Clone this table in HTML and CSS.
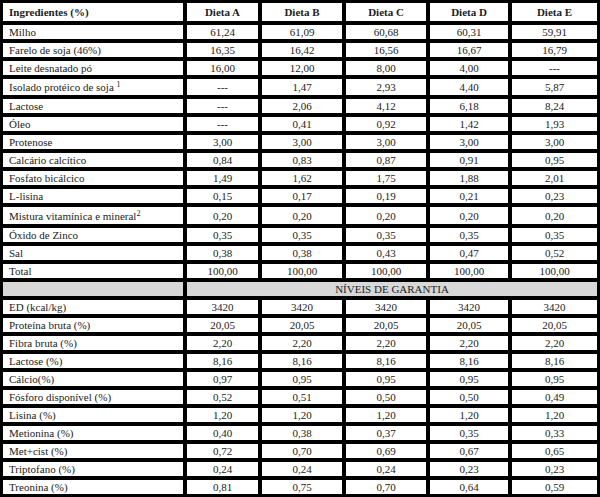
FILE: index.html
```html
<!DOCTYPE html>
<html lang="pt">
<head>
<meta charset="utf-8">
<link rel="stylesheet" href="styles.css">
</head>
<body>
<table class="tbl">
  <colgroup>
    <col class="c0"><col class="ca"><col class="cb"><col class="cc"><col class="cd"><col class="ce">
  </colgroup>
  <tr class="head">
    <td class="name">Ingredientes (%)</td><td>Dieta A</td><td>Dieta B</td><td>Dieta C</td><td>Dieta D</td><td>Dieta E</td>
  </tr>
  <tr><td class="name">Milho</td><td>61,24</td><td>61,09</td><td>60,68</td><td>60,31</td><td>59,91</td></tr>
  <tr><td class="name">Farelo de soja (46%)</td><td>16,35</td><td>16,42</td><td>16,56</td><td>16,67</td><td>16,79</td></tr>
  <tr><td class="name">Leite desnatado pó</td><td>16,00</td><td>12,00</td><td>8,00</td><td>4,00</td><td>---</td></tr>
  <tr class="tall"><td class="name">Isolado protéico de soja <sup>1</sup></td><td>---</td><td>1,47</td><td>2,93</td><td>4,40</td><td>5,87</td></tr>
  <tr><td class="name">Lactose</td><td>---</td><td>2,06</td><td>4,12</td><td>6,18</td><td>8,24</td></tr>
  <tr><td class="name">Óleo</td><td>---</td><td>0,41</td><td>0,92</td><td>1,42</td><td>1,93</td></tr>
  <tr><td class="name">Protenose</td><td>3,00</td><td>3,00</td><td>3,00</td><td>3,00</td><td>3,00</td></tr>
  <tr><td class="name">Calcário calcítico</td><td>0,84</td><td>0,83</td><td>0,87</td><td>0,91</td><td>0,95</td></tr>
  <tr><td class="name">Fosfato bicálcico</td><td>1,49</td><td>1,62</td><td>1,75</td><td>1,88</td><td>2,01</td></tr>
  <tr><td class="name">L-lisina</td><td>0,15</td><td>0,17</td><td>0,19</td><td>0,21</td><td>0,23</td></tr>
  <tr class="taller"><td class="name">Mistura vitamínica e mineral<sup>2</sup></td><td>0,20</td><td>0,20</td><td>0,20</td><td>0,20</td><td>0,20</td></tr>
  <tr><td class="name">Óxido de Zinco</td><td>0,35</td><td>0,35</td><td>0,35</td><td>0,35</td><td>0,35</td></tr>
  <tr><td class="name">Sal</td><td>0,38</td><td>0,38</td><td>0,43</td><td>0,47</td><td>0,52</td></tr>
  <tr><td class="name">Total</td><td>100,00</td><td>100,00</td><td>100,00</td><td>100,00</td><td>100,00</td></tr>
  <tr class="section"><td class="name"></td><td colspan="5">NÍVEIS DE GARANTIA</td></tr>
  <tr><td class="name">ED (kcal/kg)</td><td>3420</td><td>3420</td><td>3420</td><td>3420</td><td>3420</td></tr>
  <tr><td class="name">Proteína bruta (%)</td><td>20,05</td><td>20,05</td><td>20,05</td><td>20,05</td><td>20,05</td></tr>
  <tr><td class="name">Fibra bruta (%)</td><td>2,20</td><td>2,20</td><td>2,20</td><td>2,20</td><td>2,20</td></tr>
  <tr><td class="name">Lactose (%)</td><td>8,16</td><td>8,16</td><td>8,16</td><td>8,16</td><td>8,16</td></tr>
  <tr><td class="name">Cálcio(%)</td><td>0,97</td><td>0,95</td><td>0,95</td><td>0,95</td><td>0,95</td></tr>
  <tr><td class="name">Fósforo disponível (%)</td><td>0,52</td><td>0,51</td><td>0,50</td><td>0,50</td><td>0,49</td></tr>
  <tr><td class="name">Lisina (%)</td><td>1,20</td><td>1,20</td><td>1,20</td><td>1,20</td><td>1,20</td></tr>
  <tr><td class="name">Metionina (%)</td><td>0,40</td><td>0,38</td><td>0,37</td><td>0,35</td><td>0,33</td></tr>
  <tr><td class="name">Met+cist (%)</td><td>0,72</td><td>0,70</td><td>0,69</td><td>0,67</td><td>0,65</td></tr>
  <tr><td class="name">Triptofano (%)</td><td>0,24</td><td>0,24</td><td>0,24</td><td>0,23</td><td>0,23</td></tr>
  <tr><td class="name">Treonina (%)</td><td>0,81</td><td>0,75</td><td>0,70</td><td>0,64</td><td>0,59</td></tr>
</table>
</body>
</html>
```
FILE: styles.css
```css
html, body {
  margin: 0;
  padding: 0;
  background: #000;
  width: 600px;
  height: 497px;
  overflow: hidden;
}
.tbl {
  margin: -1px 0 0 -1px;
  border-collapse: separate;
  border-spacing: 4px;
  table-layout: fixed;
  width: 602px;
  font-family: "Liberation Serif", "Times New Roman", serif;
  font-size: 11px;
  color: #222;
}
.c0 { width: 180px; }
.ca { width: 71px; }
.cb { width: 80px; }
.cc { width: 80px; }
.cd { width: 78px; }
.ce { width: 85px; }
.tbl td {
  background: #fff;
  padding: 0;
  height: 14px;
  line-height: 14px;
  text-align: center;
  white-space: nowrap;
  overflow: hidden;
}
.tbl td.name {
  text-align: left;
  padding-left: 6px;
}
.head td {
  height: 18px;
  font-weight: bold;
}
.tall td { height: 16px; }
.taller td { height: 17px; }
.section td {
  background: #d8d8d8;
  height: 14px;
}
sup {
  font-size: 8px;
  line-height: 0;
  vertical-align: 4px;
}
```
